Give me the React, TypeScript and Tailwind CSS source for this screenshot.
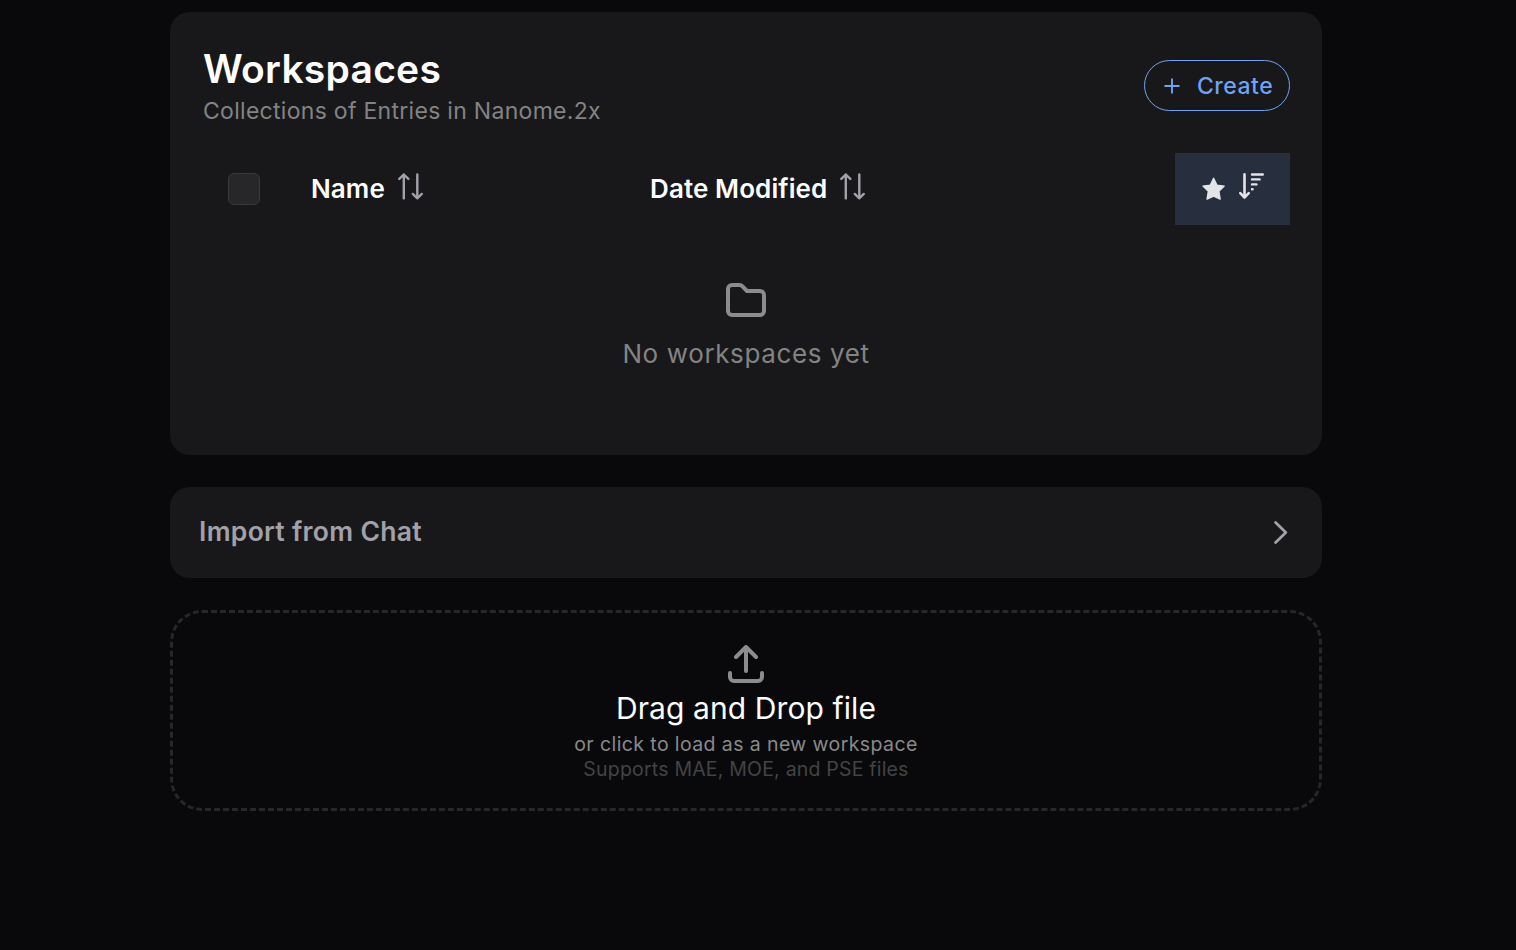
import type { ReactNode } from "react";

function SortIcon() {
  return (
    <svg width="26" height="27" viewBox="0 0 26 27" fill="none" stroke="#a1a1aa" strokeWidth="2.4" strokeLinecap="round" strokeLinejoin="round">
      <path d="M5.8 25.4V1.5M1.3 5.9l4.5-4.4 4.5 4.4" />
      <path d="M19.3 1.4v23.9M14.8 20.9l4.5 4.4 4.5-4.4" />
    </svg>
  );
}

function SortDescendingIcon() {
  return (
    <svg width="26" height="26" viewBox="0 0 26 26" fill="none" stroke="#e4e4e7" strokeLinecap="round" strokeLinejoin="round">
      <path strokeWidth="2.6" d="M5.5 1.4v23.1M1.3 20.2l4.2 4.3 4.2-4.3" />
      <path strokeWidth="2.4" d="M13 1.5h10.8M13 6.4h7.6M13 11.4h4.5M13 16.2h.6" />
    </svg>
  );
}

function StarIcon() {
  return (
    <svg width="24" height="24" viewBox="0 0 24 24" fill="#e4e4e7" stroke="#e4e4e7" strokeWidth="1.4" strokeLinejoin="round">
      <path d="M11.6 1.3l3.25 6.8 7.35 1-5.35 5.2 1.3 7.8-6.55-3-6.55 3 1.3-7.8L1 9.1l7.35-1z" />
    </svg>
  );
}

function HeaderLabel({ children }: { children: ReactNode }) {
  return <span className="text-[26px] leading-9 font-semibold tracking-[0.1px] whitespace-nowrap text-white">{children}</span>;
}

export default function App() {
  return (
    <main className="flex h-[950px] w-[1516px] flex-col gap-8 overflow-hidden bg-[#09090b] pt-3 pr-[194px] pl-[170px] font-['Inter','Liberation_Sans',sans-serif]">
      <section className="flex h-[443px] shrink-0 flex-col rounded-[20px] bg-[#18181a] px-8 pt-8">
        <header className="flex h-[109px] items-start justify-between pl-px">
          <div className="whitespace-nowrap">
            <h1 className="text-[39px] leading-[50px] font-semibold tracking-[0.25px] text-white">Workspaces</h1>
            <p className="text-[23px] leading-[34px] font-normal tracking-[0.29px] text-[#838384]">Collections of Entries in Nanome.2x</p>
          </div>
          <button className="mt-4 flex h-[51px] w-[146px] items-center rounded-full border border-[#6ea3f5] pl-[19px] text-[#6ea3f5]">
            <svg width="16" height="16" viewBox="0 0 16 16" fill="none" stroke="currentColor" strokeWidth="1.9" strokeLinecap="round">
              <path d="M8 1.2v13.6M1.2 8h13.6" />
            </svg>
            <span className="ml-[17px] text-[23px] leading-8 font-medium tracking-[0.5px]">Create</span>
          </button>
        </header>

        <div className="flex h-[72px] items-center">
          <div className="ml-[26px] size-8 rounded-md border border-[#3a3a3d] bg-[#27272a]" />
          <div className="ml-[51px] flex w-[339px] items-center gap-[13px]">
            <HeaderLabel>Name</HeaderLabel>
            <span className="mb-[6px]"><SortIcon /></span>
          </div>
          <div className="flex items-center gap-[13px]">
            <HeaderLabel>Date Modified</HeaderLabel>
            <span className="mb-[6px]"><SortIcon /></span>
          </div>
          <div className="ml-auto flex h-full w-[115px] items-center gap-[13px] bg-[#272e3e] pl-[27px]">
            <StarIcon />
            <span className="mb-[6px]"><SortDescendingIcon /></span>
          </div>
        </div>

        <div className="flex flex-col items-center pt-[58px]">
          <svg width="40" height="34" viewBox="0 0 40 34" fill="none" stroke="#8c8c8c" strokeWidth="4" strokeLinejoin="round">
            <path d="M2 28V6a4 4 0 0 1 4-4h7.5a4 4 0 0 1 3 1.3L21 8h13a4 4 0 0 1 4 4v16a4 4 0 0 1-4 4H6a4 4 0 0 1-4-4z" />
          </svg>
          <p className="mt-[17px] text-[26px] leading-10 font-normal tracking-[0.62px] whitespace-nowrap text-[#838384]">No workspaces yet</p>
        </div>
      </section>

      <section className="flex h-[91px] shrink-0 items-center justify-between rounded-[20px] bg-[#18181a] pr-[34px] pl-[29px]">
        <h2 className="mb-[3px] text-[26.5px] leading-10 font-semibold tracking-[0.3px] whitespace-nowrap text-[#a1a1aa]">Import from Chat</h2>
        <svg width="14" height="23" viewBox="0 0 14 23" fill="none" stroke="#a1a1aa" strokeWidth="2.8" strokeLinecap="round" strokeLinejoin="round">
          <path d="M1.6 1.6l10.2 9.9L1.6 21.4" />
        </svg>
      </section>

      <section className="flex h-[201px] shrink-0 flex-col items-center rounded-[32px] border-[3px] border-dashed border-[#27272a] pt-8 whitespace-nowrap">
        <svg width="36" height="38" viewBox="0 0 36 38" fill="none" stroke="#8c8c8c" strokeWidth="4" strokeLinecap="round" strokeLinejoin="round">
          <path d="M18 26V2M8 12L18 2l10 10" />
          <path d="M2 28v4a4 4 0 0 0 4 4h24a4 4 0 0 0 4-4v-4" />
        </svg>
        <p className="mt-[5px] text-[30px] leading-10 font-normal tracking-[0.1px] text-white">Drag and Drop file</p>
        <p className="mt-1 text-[19.5px] leading-[25px] font-normal tracking-[0.4px] text-[#8a8a8a]">or click to load as a new workspace</p>
        <p className="text-[19.5px] leading-[25px] font-normal tracking-[0.2px] text-[#434345]">Supports MAE, MOE, and PSE files</p>
      </section>
    </main>
  );
}
